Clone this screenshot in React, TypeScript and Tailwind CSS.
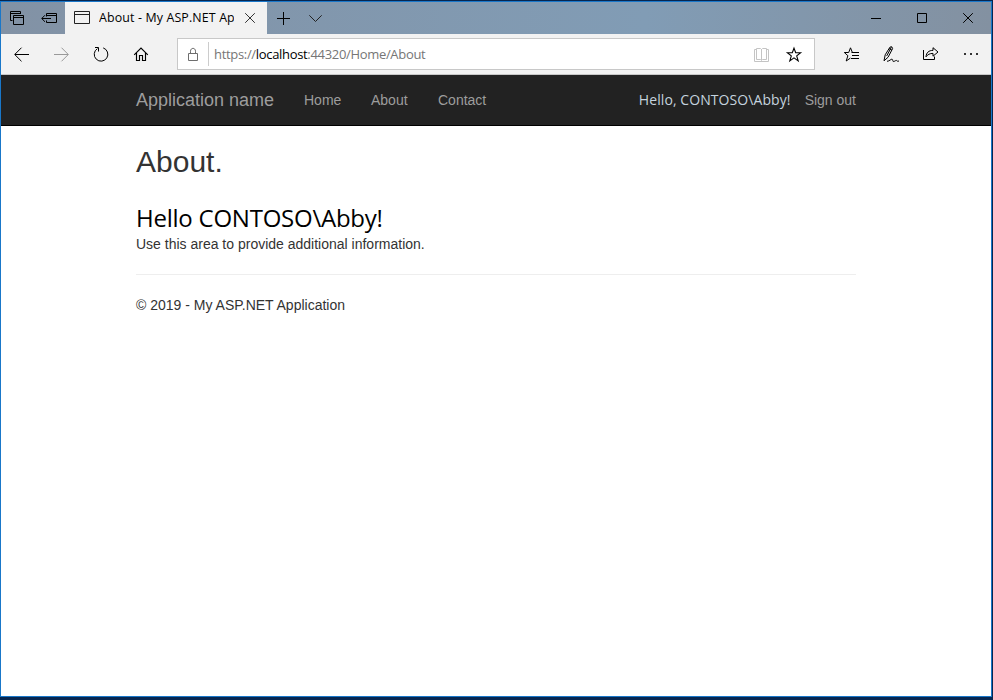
import type { ReactNode } from "react";

type IconProps = {
  box: string;
  className: string;
  label: string;
  children: ReactNode;
};

function Icon({ box, className, label, children }: IconProps) {
  return (
    <svg
      viewBox={box}
      aria-label={label}
      className={"block shrink-0 fill-none stroke-black " + className}
    >
      {children}
    </svg>
  );
}

function TitleBar() {
  return (
    <div className="flex h-8 shrink-0 bg-linear-to-r from-[#8292a5] via-[#819cb5] via-65% to-[#8391a1]">
      <Icon box="1 2 32 32" className="h-8 w-8" label="Tabs set aside">
        <path d="M12.5 20.5H10.5V11.5H20.5V14M10.5 13.5H20.5" />
        <path d="M13.5 15.5H23.5V24.5H13.5zM13.5 17.5H23.5" />
      </Icon>
      <Icon box="33 2 32 32" className="h-8 w-8" label="Set tabs aside">
        <path d="M46.5 16.5V13.5H56.5V22.5H46.5V20.5M46.5 15.5H56.5M42 18.5H51M45 15.2L41.7 18.5L45 21.8" />
      </Icon>
      <div className="flex w-[202px] bg-[#f2f2f2]">
        <Icon box="65 2 34 32" className="h-8 w-[34px]" label="Page">
          <path className="stroke-[#222]" d="M74.5 11.5H89.5V23.5H74.5zM74.5 14.5H89.5" />
        </Icon>
        <div className="w-[135px] overflow-hidden pt-[7px] text-[12.4px] leading-[18px] tracking-[0.14px] whitespace-nowrap">
          About - My ASP.NET Ap
        </div>
        <Icon box="234 2 33 32" className="h-8 w-[33px]" label="Close tab">
          <path className="stroke-[#333]" d="M245.2 13.2L254.8 22.8M254.8 13.2L245.2 22.8" />
        </Icon>
      </div>
      <Icon box="267 2 32 32" className="h-8 w-8" label="New tab">
        <path d="M277 18.5H290M283.5 12V25" />
      </Icon>
      <Icon box="299 2 32 32" className="h-8 w-8" label="Tab previews">
        <path className="stroke-[#222]" d="M309.3 15.3L315.5 21.5L321.7 15.3" />
      </Icon>
      <div className="flex-1" />
      <Icon box="853 2 46 32" className="h-8 w-[46px]" label="Minimize">
        <path d="M871 18.5H881" />
      </Icon>
      <Icon box="899 2 46 32" className="h-8 w-[46px]" label="Maximize">
        <path d="M917.5 13.5H926.5V22.5H917.5z" />
      </Icon>
      <Icon box="945 2 46 32" className="h-8 w-[46px]" label="Close">
        <path d="M963.2 13.2L972.8 22.8M972.8 13.2L963.2 22.8" />
      </Icon>
    </div>
  );
}

function ToolBar() {
  return (
    <div className="flex h-[41px] shrink-0 border-b border-[#c8c8c8] bg-[#f2f2f2]">
      <Icon box="1 34 40 40" className="h-10 w-10" label="Back">
        <path d="M29 54.5H15M21.5 47.7L14.7 54.5L21.5 61.3" />
      </Icon>
      <Icon box="41 34 40 40" className="h-10 w-10" label="Forward">
        <path className="stroke-[#999]" d="M54 54.5H68M61.5 47.7L68.3 54.5L61.5 61.3" />
      </Icon>
      <Icon box="81 34 40 40" className="h-10 w-10" label="Refresh">
        <path d="M103.2 47.9A6.8 6.8 0 1 1 97.4 48.6M95 47.5H98.5V51.5" />
      </Icon>
      <Icon box="121 34 40 40" className="h-10 w-10" label="Home">
        <path
          strokeWidth="1.15"
          d="M134.2 54.8L141 48.1L147.8 54.8M136.5 53V60.5H139.5V55.5H142.5V60.5H145.5V53"
        />
      </Icon>
      <div className="mt-1 ml-4 flex h-8 w-[638px] border border-[#c8c8c8] bg-white">
        <Icon box="178 39 30 30" className="h-[30px] w-[30px]" label="Secure">
          <path className="stroke-[#6e6e6e]" d="M188.5 53.5H197.5V60.5H188.5zM190.5 53V51.2C190.5 47.4 195.5 47.4 195.5 51.2V53" />
        </Icon>
        <div className="mt-[3px] h-6 w-px bg-[#ccc]" />
        <div className="flex-1 pt-[6px] pl-[5px] text-[13px] leading-[18px] tracking-[-0.32px] text-[#767676]">
          https://<span className="text-black">localhost</span>:44320/Home/About
        </div>
        <Icon box="746 39 32 30" className="h-[30px] w-8" label="Reading view">
          <path className="stroke-[#c4c4c4]" d="M756.5 48.5H760.5L761.5 49.5L762.5 48.5H766.5V59.5H762.5L761.5 60.5L760.5 59.5H756.5zM761.5 49V60M756 49.5H754.5V61.5H768.5V49.5H767" />
        </Icon>
        <Icon box="778 39 36 30" className="h-[30px] w-9" label="Add to favorites">
          <path strokeWidth="1.1" d="M794 48.2L795.7 52.8H800.6L796.7 55.9L798.2 60.9L794 57.9L789.8 60.9L791.3 55.9L787.4 52.8H792.3z" />
        </Icon>
      </div>
      <div className="flex-1" />
      <Icon box="831 34 40 40" className="h-10 w-10" label="Hub">
        <path d="M857 52.5H852.4L850.5 47.8L848.7 52.5H844.3L847.9 55.7L846.2 61L850.4 58.1M851.5 52.5H859M852 55.5H859M851 58.5H859" />
      </Icon>
      <Icon box="871 34 40 40" className="h-10 w-10" label="Add notes">
        <path d="M884 60.8L885.2 54.8L890 47.1Q892.2 45.6 892.6 48.6L888.1 57.2L884 60.8M889.1 48.6L891.9 50.1M886.7 55.9L891.3 47.4M887 61.3C889.8 61.2 890.9 58.8 892.1 59.2C893.4 59.8 892.1 61.6 893.7 61.5C895.3 61.2 896.1 59.8 896.8 60.7Q897.5 61.7 899 61" />
      </Icon>
      <Icon box="911 34 40 40" className="h-10 w-10" label="Share">
        <path d="M923.5 50V59.5H934.5V56.5M926 56.8C926.4 52.6 928.7 50.4 933 50.4V47.7L938 52L933 56.2V53.4C929.8 53.4 927.7 54.5 926 56.8z" />
      </Icon>
      <Icon box="951 34 40 40" className="h-10 w-10" label="More">
        <path d="M964 54H966M970 54H972M976 54H978" strokeWidth="2" className="stroke-[#333]" />
      </Icon>
    </div>
  );
}

function NavBar() {
  return (
    <nav className="flex h-[51px] shrink-0 items-start border-b border-black bg-[#222] pr-[135px] pl-[135px] text-[14px] leading-5 text-[#9d9d9d]">
      <span className="mt-[15px] w-[168px] text-[18px]">Application name</span>
      <span className="mt-[15px] w-[67px]">Home</span>
      <span className="mt-[15px] w-[67px]">About</span>
      <span className="mt-[15px]">Contact</span>
      <span className="mt-[15px] ml-auto font-['Open_Sans','Noto_Sans',sans-serif] tracking-[0.08px] text-[#c5d3df]">
        Hello, CONTOSO\Abby!
      </span>
      <span className="mt-[15px] ml-[14px]">Sign out</span>
    </nav>
  );
}

export default function App() {
  return (
    <div className="flex h-[700px] w-[993px] flex-col border-t border-r border-b-[3px] border-[#062650] bg-white font-['Open_Sans','Noto_Sans',sans-serif] text-black">
      <div className="flex flex-1 flex-col border border-[#1977c9]">
        <TitleBar />
        <ToolBar />
        <div className="flex flex-1 flex-col font-['Liberation_Sans',Arial,sans-serif]">
          <NavBar />
          <main className="mx-[135px] text-[14px] leading-5 text-[#333]">
            <h2 className="mt-[19px] text-[30px] leading-[33px]">About.</h2>
            <h3 className="mt-6 font-['Open_Sans','Noto_Sans',sans-serif] text-[24px] leading-8 tracking-[-0.24px] whitespace-nowrap text-black">
              Hello CONTOSO\Abby!
            </h3>
            <p>Use this area to provide additional information.</p>
            <hr className="my-5 border-[#eee]" />
            <p>© 2019 - My ASP.NET Application</p>
          </main>
        </div>
      </div>
    </div>
  );
}
